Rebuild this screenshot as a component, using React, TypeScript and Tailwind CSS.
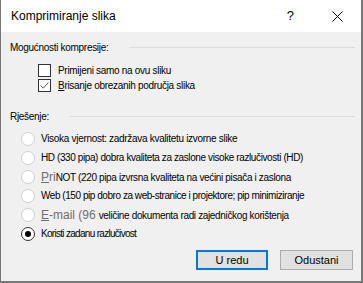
const radios = [
  {
    key: "visoka",
    cls: "tracking-[-0.3px]",
    label: <>Visoka vjernost: zadržava kvalitetu izvorne slike</>,
  },
  {
    key: "hd",
    cls: "tracking-[-0.4px]",
    label: <>HD (330 pipa) dobra kvaliteta za zaslone visoke razlučivosti (HD)</>,
  },
  {
    key: "print",
    cls: "tracking-[-0.35px]",
    label: (
      <>
        <span className="text-[12px] tracking-normal text-[#6d6d6d]">
          <span className="underline">P</span>ri
        </span>
        NOT (220 pipa izvrsna kvaliteta na većini pisača i zaslona
      </>
    ),
  },
  {
    key: "web",
    cls: "tracking-[-0.45px]",
    label: <>Web (150 pip dobro za web-stranice i projektore; pip minimiziranje</>,
  },
  {
    key: "email",
    cls: "tracking-[-0.35px]",
    label: (
      <>
        <span className="mr-[3px] text-[12px] tracking-normal text-[#6d6d6d]">
          <span className="underline">E</span>-mail (96
        </span>
        veličine dokumenta radi zajedničkog korištenja
      </>
    ),
  },
  {
    key: "default",
    cls: "tracking-[-0.7px]",
    label: <>Koristi zadanu razlučivost</>,
    checked: true,
  },
];

function Checkbox({ checked }: { checked?: boolean }) {
  return (
    <div className="flex h-[13px] w-[13px] items-center justify-center border border-[#333] bg-white">
      {checked && (
        <svg width="11" height="11" viewBox="0 0 11 11">
          <path d="M1.5 5.5 L4.2 8.2 L9.5 2.5" fill="none" stroke="#555" strokeWidth="1" />
        </svg>
      )}
    </div>
  );
}

function Radio({ checked }: { checked?: boolean }) {
  return (
    <div
      className={
        checked
          ? "flex h-[14px] w-[14px] items-center justify-center rounded-full border border-[#333] bg-white"
          : "h-[14px] w-[14px] rounded-full border border-[#cfcfcf] bg-white"
      }
    >
      {checked && <div className="h-[6px] w-[6px] rounded-full bg-black" />}
    </div>
  );
}

function Section({ title }: { title: string }) {
  return (
    <div className="flex h-[16px] items-center gap-[21px]">
      <span>{title}</span>
      <div className="h-px flex-1 bg-[#dcdcdc]" />
    </div>
  );
}

export default function App() {
  return (
    <div
      className="flex h-[283px] w-[363px] flex-col border-r-2 border-b-2 border-l border-[#777] bg-[#f0f0f0] text-[10px] tracking-[-0.3px] text-black"
      style={{ fontFamily: '"Liberation Sans", Arial, sans-serif' }}
    >
      <div className="flex h-[32px] shrink-0 items-center bg-white pl-[10px] tracking-normal">
        <span className="text-[12px]">Komprimiranje slika</span>
        <span className="ml-auto mr-[38px] text-[13px]">?</span>
        <svg width="11" height="11" viewBox="0 0 11 11" className="mr-[18px]">
          <path d="M0.5 0.5 L10.5 10.5 M10.5 0.5 L0.5 10.5" stroke="#000" strokeWidth="1" />
        </svg>
      </div>

      <div className="flex flex-1 flex-col pl-[9px] pr-[6px]">
        <div className="mt-[7px]">
          <Section title="Mogućnosti kompresije:" />
        </div>
        <div className="mt-[8px] flex h-[15px] items-center gap-[7px] pl-[28px]">
          <Checkbox />
          <span>Primijeni samo na ovu sliku</span>
        </div>
        <div className="flex h-[15px] items-center gap-[7px] pl-[28px]">
          <Checkbox checked />
          <span>
            <span className="underline">B</span>risanje obrezanih područja slika
          </span>
        </div>

        <div className="mt-[15px]">
          <Section title="Rješenje:" />
        </div>
        <div className="mt-[5px] flex flex-col">
          {radios.map((r) => (
            <div key={r.key} className="flex h-[19px] items-center gap-[6px] pl-[11px]">
              <Radio checked={r.checked} />
              <span className={"whitespace-nowrap " + r.cls}>{r.label}</span>
            </div>
          ))}
        </div>

        <div className="mt-[7px] flex justify-end gap-[12px] pr-[2px] tracking-normal">
          <button className="h-[20px] w-[72px] border-2 border-[#0078d7] bg-[#e1e1e1] text-[11px]">
            U redu
          </button>
          <button className="h-[20px] w-[73px] border border-[#adadad] bg-[#e1e1e1] text-[11px]">
            Odustani
          </button>
        </div>
      </div>
    </div>
  );
}
